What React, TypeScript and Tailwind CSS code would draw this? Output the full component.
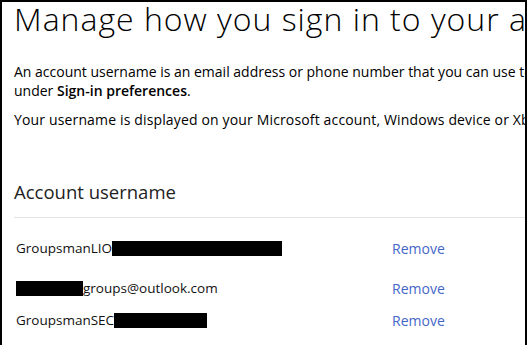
import React from 'react';

type Username = {
  before: string;
  masked: number;
  after: string;
  rowClass: string;
};

const usernames: Username[] = [
  { before: 'GroupsmanLIO', masked: 170, after: '', rowClass: 'mt-[22px] h-[17px]' },
  { before: '', masked: 67, after: 'groups@outlook.com', rowClass: 'mt-[23px] h-[17px]' },
  { before: 'GroupsmanSEC', masked: 93, after: '', rowClass: 'mt-[15px] h-[17px]' },
];

const Mask = ({ width }: { width: number }) => (
  <span className="inline-block h-[15px] bg-black align-[-3px]" style={{ width }} />
);

const UsernameRow = ({ item }: { item: Username }) => (
  <div className={`flex items-center ${item.rowClass}`}>
    <div className="w-[378px] whitespace-nowrap pl-[2px] text-[13.5px] text-[#111]">
      {item.before}
      {item.masked > 0 && <Mask width={item.masked} />}
      {item.after}
    </div>
    <a href="#" className="text-[14px] text-[#4466c8]">Remove</a>
  </div>
);

const App = () => {
  return (
    <div className="h-[345px] w-[527px] overflow-hidden border-x-2 border-t-2 border-black bg-white font-['Open_Sans','Liberation_Sans',sans-serif] text-black">
      <div className="pl-[12px]">
        <h1 className="mt-[-2px] whitespace-nowrap text-[32px] font-light leading-[38px] tracking-[1px]">
          Manage how you sign in to your account
        </h1>

        <p className="mt-[24px] whitespace-nowrap text-[14px] leading-[19px]">
          An account username is an email address or phone number that you can use to sign in
          <br />
          under <span className="font-semibold">Sign-in preferences</span>.
        </p>

        <p className="mt-[10px] whitespace-nowrap text-[14px] leading-[19px] tracking-[0.15px]">
          Your username is displayed on your Microsoft account, Windows device or Xbox console.
        </p>

        <h2 className="mt-[50px] text-[18.5px] leading-[26px] text-[#222]">Account username</h2>

        <div className="mt-[12px] border-t border-[#e3e3e3]" />

        {usernames.map((u, i) => (
          <UsernameRow key={i} item={u} />
        ))}
      </div>
    </div>
  );
};

export default App;
